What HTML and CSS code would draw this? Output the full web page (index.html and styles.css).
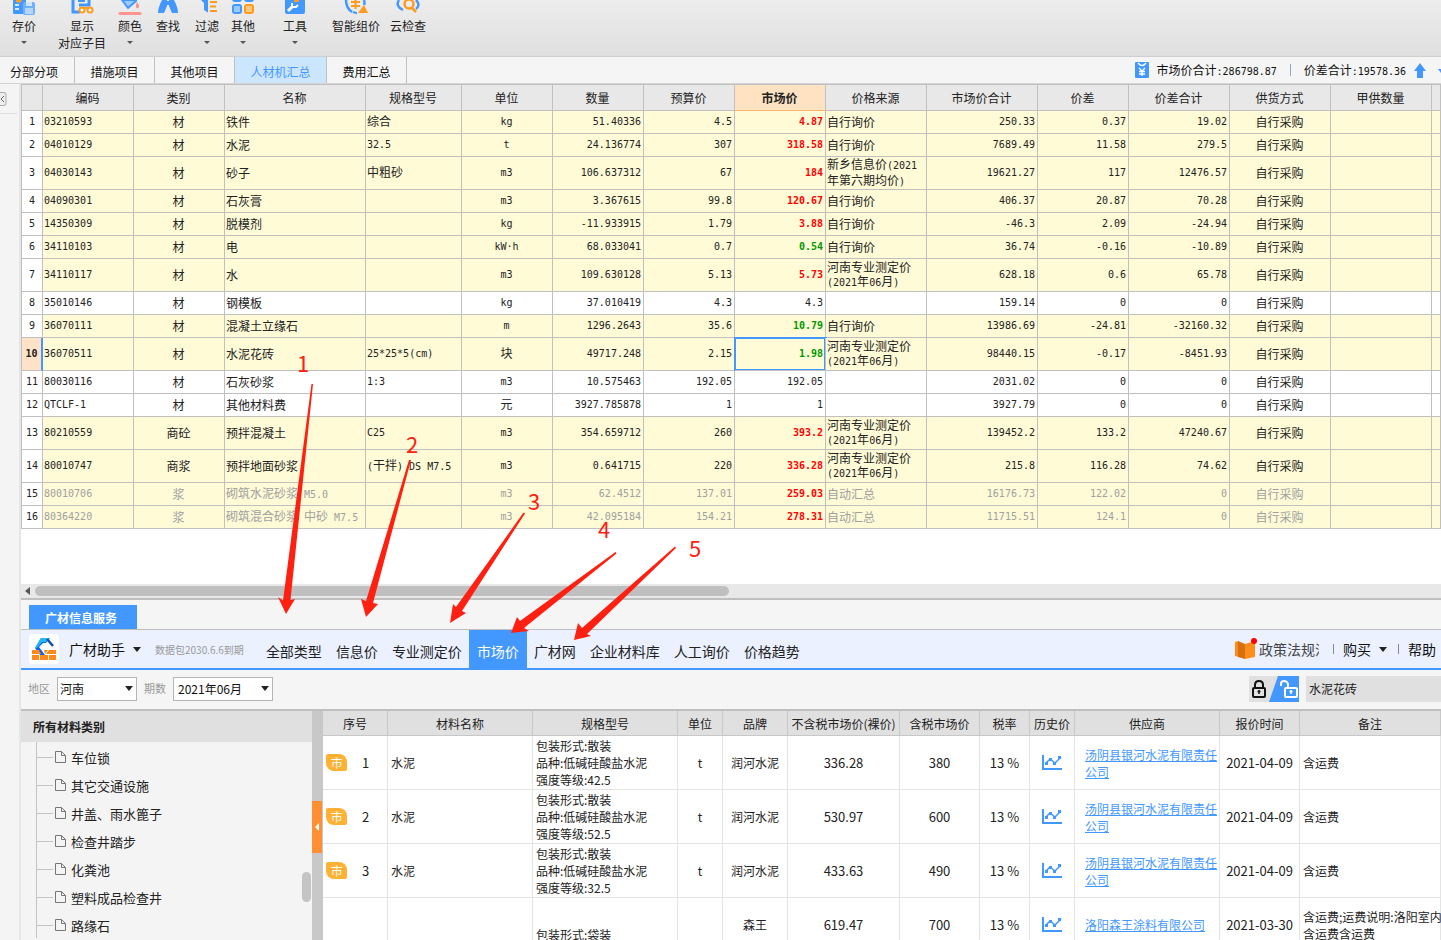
FILE: index.html
```html
<!DOCTYPE html>
<html lang="zh-CN">
<head>
<meta charset="utf-8">
<title>人材机汇总</title>
<link rel="stylesheet" href="styles.css">
</head>
<body>
<div class="app">
  <header class="toolbar">
    <button class="tool"><svg width="24" height="15" viewBox="0 0 24 15"><rect x="1" y="-6" width="13" height="20" rx="1" fill="#4398ff"/><path d="M3 5h4M3 9h4" stroke="#d8eaff" stroke-width="2"/><path d="M4 0h6L8 3 4 2z" fill="#ff9b1f"/><rect x="11" y="2" width="12" height="13" rx="2" fill="#6fb1ff"/><rect x="14" y="2" width="6" height="4" fill="#cfe5ff"/><rect x="13" y="8" width="8" height="6" fill="#b5d7ff"/></svg><span>存价</span><i class="caret"></i></button>
    <button class="tool"><svg width="24" height="15" viewBox="0 0 24 15"><path d="M3 0v12h7M19 0v5H9" fill="none" stroke="#4398ff" stroke-width="3"/><path d="M8 1h7" stroke="#4398ff" stroke-width="2"/><path d="M14 8h4" stroke="#ff9b1f" stroke-width="2"/><circle cx="12" cy="10" r="2.5" fill="#fff" stroke="#ff9b1f" stroke-width="2"/><circle cx="20" cy="10" r="2.5" fill="#fff" stroke="#ff9b1f" stroke-width="2"/></svg><span>显示</span><span>对应子目</span></button>
    <button class="tool"><svg width="24" height="15" viewBox="0 0 24 15"><path d="M4 0l6 8 8-7V0z" fill="#9accff" stroke="#4398ff" stroke-width="2" stroke-linejoin="round"/><path d="M19 2c2 3 3 5 1 6s-3-2-1-6z" fill="#ff8f8c"/><path d="M2 13.500h20" stroke="#ff9390" stroke-width="3" stroke-linecap="round"/></svg><span>颜色</span><i class="caret"></i></button>
    <button class="tool"><svg width="24" height="15" viewBox="0 0 24 15"><path d="M6 0h5v6L8 13H2C2 8 4 4 6 0zM13 0h5c2 4 4 8 4 13h-6l-3-7z" fill="#4398ff"/><path d="M10 1h4v4h-4z" fill="#4398ff"/></svg><span>查找</span></button>
    <button class="tool"><svg width="24" height="15" viewBox="0 0 24 15"><path d="M6 0h9v14l-6-4V3z" fill="#4398ff"/><path d="M14 0v15" stroke="#e8e8e8" stroke-width="2"/><path d="M15 2h7M15 6.500h6M15 11h7" stroke="#ff9b1f" stroke-width="2"/></svg><span>过滤</span><i class="caret"></i></button>
    <button class="tool"><svg width="24" height="15" viewBox="0 0 24 15"><rect x="2" y="-7" width="8" height="8" rx="2" fill="#9accff" stroke="#4398ff" stroke-width="2"/><rect x="14" y="-7" width="8" height="8" rx="2" fill="#9accff" stroke="#4398ff" stroke-width="2"/><rect x="2" y="5" width="8" height="8" rx="2" fill="#9accff" stroke="#4398ff" stroke-width="2"/><rect x="14" y="5" width="8" height="8" rx="2" fill="#ffc97d" stroke="#ff9b1f" stroke-width="2"/></svg><span>其他</span><i class="caret"></i></button>
    <button class="tool"><svg width="24" height="15" viewBox="0 0 24 15"><path d="M2 0h20v12q0 2-2 2H4q-2 0-2-2z" fill="#4398ff"/><path d="M11 0h5v2h-5z" fill="#ff9b1f"/><path d="M5 11l5-5" stroke="#fff" stroke-width="3"/><path d="M9 3v4h4l2-2" fill="none" stroke="#fff" stroke-width="2"/></svg><span>工具</span><i class="caret"></i></button>
    <button class="tool"><svg width="24" height="15" viewBox="0 0 24 15"><path d="M2 0q0 8 6 12M20 0q1 3 0 5" fill="none" stroke="#4398ff" stroke-width="2.500"/><path d="M9 12q2 1 4 1" fill="none" stroke="#4398ff" stroke-width="2"/><path d="M11.500 0v9M7 2h9M7 6h9" stroke="#ff9b1f" stroke-width="2"/><path d="M20 5l4 8h-10z" fill="#ff9b1f"/></svg><span>智能组价</span></button>
    <button class="tool"><svg width="24" height="15" viewBox="0 0 24 15"><path d="M3 0q-4 6 4 10M20 0q5 5 0 9" fill="none" stroke="#4398ff" stroke-width="2.500"/><circle cx="13" cy="4" r="4.500" fill="none" stroke="#ff9b1f" stroke-width="2.500"/><path d="M16 8l4 4" stroke="#ff9b1f" stroke-width="2.500"/></svg><span>云检查</span></button>
  </header>

  <nav class="tabs">
    <button class="tab first">分部分项</button>
    <button class="tab">措施项目</button>
    <button class="tab">其他项目</button>
    <button class="tab on">人材机汇总</button>
    <button class="tab">费用汇总</button>
    <div class="totals">
      <svg width="14" height="16" viewBox="0 0 14 16"><rect width="14" height="16" rx="1" fill="#4398ff"/><path d="M3 1q4 5 8 0" fill="none" stroke="#fff" stroke-width="1.500"/><path d="M4 6l3 3 3-3M7 9v5M4 9.500h6M4 12h6" fill="none" stroke="#fff" stroke-width="1.300"/></svg>
      <span>市场价合计<span class="m">:286798.87</span></span>
      <i class="bar"></i>
      <span>价差合计<span class="m">:19578.36</span></span>
      <svg class="up" width="12" height="15" viewBox="0 0 12 15"><path d="M6 0l6 8H9v7H3V8H0z" fill="#4398ff"/></svg>
      <svg width="3" height="15" viewBox="0 0 3 15"><path d="M0 6h3v4z" fill="#4398ff"/></svg>
    </div>
  </nav>

  <main class="main">
    <aside class="strip"><button class="expand" aria-label="展开"><svg width="7" height="14" viewBox="0 0 7 14"><path d="M-1 .5h5q2 0 2 2v9q0 2-2 2h-5" fill="#eee" stroke="#aaa"/><path d="M4 4L1 7l3 3" fill="none" stroke="#666"/></svg></button></aside>
    <div class="content">
      <section class="gridpane">
        <table class="grid">
          <colgroup><col class="w21"><col class="w91"><col class="w91"><col class="w141"><col class="w96"><col class="w91"><col class="w91"><col class="w91"><col class="w91"><col class="w101"><col class="w111"><col class="w91"><col class="w101"><col class="w101"><col class="w101"><col></colgroup>
          <thead><tr><th></th><th>编码</th><th>类别</th><th>名称</th><th>规格型号</th><th>单位</th><th>数量</th><th>预算价</th><th class="cur">市场价</th><th>价格来源</th><th>市场价合计</th><th>价差</th><th>价差合计</th><th>供货方式</th><th>甲供数量</th><th></th></tr></thead>
          <tbody>
            <tr><td>1</td><td>03210593</td><td>材</td><td>铁件</td><td><span class="z">综合</span></td><td>kg</td><td>51.40336</td><td>4.5</td><td class="up">4.87</td><td>自行询价</td><td>250.33</td><td>0.37</td><td>19.02</td><td>自行采购</td><td></td><td></td></tr>
            <tr><td>2</td><td>04010129</td><td>材</td><td>水泥</td><td>32.5</td><td>t</td><td>24.136774</td><td>307</td><td class="up">318.58</td><td>自行询价</td><td>7689.49</td><td>11.58</td><td>279.5</td><td>自行采购</td><td></td><td></td></tr>
            <tr class="tall"><td>3</td><td>04030143</td><td>材</td><td>砂子</td><td><span class="z">中粗砂</span></td><td>m3</td><td>106.637312</td><td>67</td><td class="up">184</td><td>新乡信息价<span class="m">(2021</span><br>年第六期均价<span class="m">)</span></td><td>19621.27</td><td>117</td><td>12476.57</td><td>自行采购</td><td></td><td></td></tr>
            <tr><td>4</td><td>04090301</td><td>材</td><td>石灰膏</td><td></td><td>m3</td><td>3.367615</td><td>99.8</td><td class="up">120.67</td><td>自行询价</td><td>406.37</td><td>20.87</td><td>70.28</td><td>自行采购</td><td></td><td></td></tr>
            <tr><td>5</td><td>14350309</td><td>材</td><td>脱模剂</td><td></td><td>kg</td><td>-11.933915</td><td>1.79</td><td class="up">3.88</td><td>自行询价</td><td>-46.3</td><td>2.09</td><td>-24.94</td><td>自行采购</td><td></td><td></td></tr>
            <tr><td>6</td><td>34110103</td><td>材</td><td>电</td><td></td><td>kW·h</td><td>68.033041</td><td>0.7</td><td class="down">0.54</td><td>自行询价</td><td>36.74</td><td>-0.16</td><td>-10.89</td><td>自行采购</td><td></td><td></td></tr>
            <tr class="tall"><td>7</td><td>34110117</td><td>材</td><td>水</td><td></td><td>m3</td><td>109.630128</td><td>5.13</td><td class="up">5.73</td><td>河南专业测定价<br><span class="m">(2021</span>年<span class="m">06</span>月<span class="m">)</span></td><td>628.18</td><td>0.6</td><td>65.78</td><td>自行采购</td><td></td><td></td></tr>
            <tr class="plain"><td>8</td><td>35010146</td><td>材</td><td>钢模板</td><td></td><td>kg</td><td>37.010419</td><td>4.3</td><td>4.3</td><td></td><td>159.14</td><td>0</td><td>0</td><td>自行采购</td><td></td><td></td></tr>
            <tr><td>9</td><td>36070111</td><td>材</td><td>混凝土立缘石</td><td></td><td>m</td><td>1296.2643</td><td>35.6</td><td class="down">10.79</td><td>自行询价</td><td>13986.69</td><td>-24.81</td><td>-32160.32</td><td>自行采购</td><td></td><td></td></tr>
            <tr class="tall current"><td>10</td><td>36070511</td><td>材</td><td>水泥花砖</td><td>25*25*5(cm)</td><td><span class="z">块</span></td><td>49717.248</td><td>2.15</td><td class="down active">1.98</td><td>河南专业测定价<br><span class="m">(2021</span>年<span class="m">06</span>月<span class="m">)</span></td><td>98440.15</td><td>-0.17</td><td>-8451.93</td><td>自行采购</td><td></td><td></td></tr>
            <tr class="plain"><td>11</td><td>80030116</td><td>材</td><td>石灰砂浆</td><td>1:3</td><td>m3</td><td>10.575463</td><td>192.05</td><td>192.05</td><td></td><td>2031.02</td><td>0</td><td>0</td><td>自行采购</td><td></td><td></td></tr>
            <tr class="plain"><td>12</td><td>QTCLF-1</td><td>材</td><td>其他材料费</td><td></td><td><span class="z">元</span></td><td>3927.785878</td><td>1</td><td>1</td><td></td><td>3927.79</td><td>0</td><td>0</td><td>自行采购</td><td></td><td></td></tr>
            <tr class="tall"><td>13</td><td>80210559</td><td>商砼</td><td>预拌混凝土</td><td>C25</td><td>m3</td><td>354.659712</td><td>260</td><td class="up">393.2</td><td>河南专业测定价<br><span class="m">(2021</span>年<span class="m">06</span>月<span class="m">)</span></td><td>139452.2</td><td>133.2</td><td>47240.67</td><td>自行采购</td><td></td><td></td></tr>
            <tr class="tall"><td>14</td><td>80010747</td><td>商浆</td><td>预拌地面砂浆</td><td>(<span class="z">干拌</span>) DS M7.5</td><td>m3</td><td>0.641715</td><td>220</td><td class="up">336.28</td><td>河南专业测定价<br><span class="m">(2021</span>年<span class="m">06</span>月<span class="m">)</span></td><td>215.8</td><td>116.28</td><td>74.62</td><td>自行采购</td><td></td><td></td></tr>
            <tr class="dim"><td>15</td><td>80010706</td><td>浆</td><td>砌筑水泥砂浆<span class="m"> M5.0</span></td><td></td><td>m3</td><td>62.4512</td><td>137.01</td><td class="up">259.03</td><td>自动汇总</td><td>16176.73</td><td>122.02</td><td>0</td><td>自行采购</td><td></td><td></td></tr>
            <tr class="dim"><td>16</td><td>80364220</td><td>浆</td><td>砌筑混合砂浆<span class="m"> </span>中砂<span class="m"> M7.5</span></td><td></td><td>m3</td><td>42.095184</td><td>154.21</td><td class="up">278.31</td><td>自动汇总</td><td>11715.51</td><td>124.1</td><td>0</td><td>自行采购</td><td></td><td></td></tr>
          </tbody>
        </table>
      </section>
      <div class="hscroll"><i class="left"></i><i class="thumb"></i></div>

      <section class="info">
        <div class="infotabs"><button class="infotab">广材信息服务</button></div>
        <div class="helper">
          <svg class="logo" width="30" height="30" viewBox="0 0 30 30"><rect width="30" height="30" rx="4" fill="#fff"/><path d="M12 4h9l-4 5h-3l-4 4 6 8h-5L6 14z" fill="#0c62e8"/><path d="M12 4h9l-4 4h-4l-5 6-2 0z" fill="#20b8f5"/><path d="M18 5l6 7" stroke="#0b52b5" stroke-width="2.500"/><path d="M3 16h7l2 4H3zM3 21h7v5H3zM11 21h8v5h-8zM20 21h7v5h-7zM17 20l3-4h7v4zM15 16h4l-3 4z" fill="#ff8a1c"/></svg>
          <button class="menu brand">广材助手<i class="tri"></i></button>
          <span class="expire">数据包2030.6.6到期</span>
          <nav class="kinds"><button>全部类型</button><button>信息价</button><button>专业测定价</button><button class="on">市场价</button><button>广材网</button><button>企业材料库</button><button>人工询价</button><button>价格趋势</button></nav>
          <div class="links">
            <svg width="22" height="22" viewBox="0 0 22 22"><path d="M0 4l4-1v16l-4-1z" fill="#ff8a1c"/><path d="M3 3l7 3v15l-7-2z" fill="#d86f0c"/><path d="M10 6l10-3v16l-10 2z" fill="#ff8f1c"/><circle cx="19" cy="3" r="3" fill="#f00"/></svg>
            <a class="policy" href="#">政策法规汇</a>
            <i class="sep"></i>
            <button class="menu">购买<i class="tri"></i></button>
            <i class="sep"></i>
            <button class="menu">帮助</button>
          </div>
        </div>
        <div class="filters">
          <label for="area">地区</label>
          <span class="pick area"><select id="area"><option>河南</option></select></span>
          <label for="period">期数</label>
          <span class="pick period"><select id="period"><option>2021年06月</option></select></span>
          <button class="lock" aria-label="锁定"><svg width="50" height="26" viewBox="0 0 50 26"><rect width="50" height="26" fill="#e0e0e0"/><path d="M29 0h21v26H20z" fill="#4398ff"/><rect x="4" y="12" width="12" height="9" rx="1" fill="none" stroke="#111" stroke-width="2"/><path d="M6 12V9q0-4 4-4t4 4v3" fill="none" stroke="#111" stroke-width="2"/><path d="M10 14v4M8.500 15.500h3" stroke="#111" stroke-width="1.500"/><rect x="36" y="12" width="12" height="9" rx="1" fill="none" stroke="#fff" stroke-width="2"/><path d="M32 10V8q0-3 3-3t4 3v4" fill="none" stroke="#fff" stroke-width="2"/><path d="M42 14v4M40.500 15.500h3" stroke="#fff" stroke-width="1.500"/></svg></button>
          <input class="search" type="text" value="水泥花砖" aria-label="搜索">
        </div>
        <div class="split">
          <aside class="tree">
            <h2>所有材料类别</h2>
            <ul>
              <li><svg width="11" height="12" viewBox="0 0 11 12"><path d="M.5.5h6l4 4v7H.5zM6.500.5v4h4" fill="none" stroke="#777"/></svg>车位锁</li>
              <li><svg width="11" height="12" viewBox="0 0 11 12"><path d="M.5.5h6l4 4v7H.5zM6.500.5v4h4" fill="none" stroke="#777"/></svg>其它交通设施</li>
              <li><svg width="11" height="12" viewBox="0 0 11 12"><path d="M.5.5h6l4 4v7H.5zM6.500.5v4h4" fill="none" stroke="#777"/></svg>井盖、雨水篦子</li>
              <li><svg width="11" height="12" viewBox="0 0 11 12"><path d="M.5.5h6l4 4v7H.5zM6.500.5v4h4" fill="none" stroke="#777"/></svg>检查井踏步</li>
              <li><svg width="11" height="12" viewBox="0 0 11 12"><path d="M.5.5h6l4 4v7H.5zM6.500.5v4h4" fill="none" stroke="#777"/></svg>化粪池</li>
              <li><svg width="11" height="12" viewBox="0 0 11 12"><path d="M.5.5h6l4 4v7H.5zM6.500.5v4h4" fill="none" stroke="#777"/></svg>塑料成品检查井</li>
              <li><svg width="11" height="12" viewBox="0 0 11 12"><path d="M.5.5h6l4 4v7H.5zM6.500.5v4h4" fill="none" stroke="#777"/></svg>路缘石</li>
            </ul>
            <i class="vthumb"></i>
          </aside>
          <div class="divider"><button aria-label="收起"><i></i></button></div>
          <div class="prices">
            <table class="quote">
              <colgroup><col class="w65"><col class="w145"><col class="w145"><col class="w45"><col class="w65"><col class="w112"><col class="w80"><col class="w50"><col class="w45"><col class="w145"><col class="w80"><col></colgroup>
              <thead><tr><th>序号</th><th>材料名称</th><th>规格型号</th><th>单位</th><th>品牌</th><th>不含税市场价(裸价)</th><th>含税市场价</th><th>税率</th><th>历史价</th><th>供应商</th><th>报价时间</th><th>备注</th></tr></thead>
              <tbody>
                <tr><td><div class="seq"><span class="badge">市</span><span class="no">1</span></div></td><td>水泥</td><td>包装形式:散装<br>品种:低碱硅酸盐水泥<br>强度等级:42.5</td><td>t</td><td>润河水泥</td><td>336.28</td><td>380</td><td>13 %</td><td><svg width="20" height="15" viewBox="0 0 20 15"><path d="M1 0v14h19" fill="none" stroke="#4398ff" stroke-width="2"/><path d="M4 8l4-4 5 4 6-6" fill="none" stroke="#4398ff" stroke-width="1.500"/><path d="M3 7h3v3H3zM7 3h3v3H7zM11 7h3v3h-3zM16 1h3v3h-3z" fill="#4398ff"/></svg></td><td><a href="#">汤阴县银河水泥有限责任公司</a></td><td>2021-04-09</td><td>含运费</td></tr>
                <tr><td><div class="seq"><span class="badge">市</span><span class="no">2</span></div></td><td>水泥</td><td>包装形式:散装<br>品种:低碱硅酸盐水泥<br>强度等级:52.5</td><td>t</td><td>润河水泥</td><td>530.97</td><td>600</td><td>13 %</td><td><svg width="20" height="15" viewBox="0 0 20 15"><path d="M1 0v14h19" fill="none" stroke="#4398ff" stroke-width="2"/><path d="M4 8l4-4 5 4 6-6" fill="none" stroke="#4398ff" stroke-width="1.500"/><path d="M3 7h3v3H3zM7 3h3v3H7zM11 7h3v3h-3zM16 1h3v3h-3z" fill="#4398ff"/></svg></td><td><a href="#">汤阴县银河水泥有限责任公司</a></td><td>2021-04-09</td><td>含运费</td></tr>
                <tr><td><div class="seq"><span class="badge">市</span><span class="no">3</span></div></td><td>水泥</td><td>包装形式:散装<br>品种:低碱硅酸盐水泥<br>强度等级:32.5</td><td>t</td><td>润河水泥</td><td>433.63</td><td>490</td><td>13 %</td><td><svg width="20" height="15" viewBox="0 0 20 15"><path d="M1 0v14h19" fill="none" stroke="#4398ff" stroke-width="2"/><path d="M4 8l4-4 5 4 6-6" fill="none" stroke="#4398ff" stroke-width="1.500"/><path d="M3 7h3v3H3zM7 3h3v3H7zM11 7h3v3h-3zM16 1h3v3h-3z" fill="#4398ff"/></svg></td><td><a href="#">汤阴县银河水泥有限责任公司</a></td><td>2021-04-09</td><td>含运费</td></tr>
                <tr><td></td><td></td><td class="low">包装形式:袋装</td><td></td><td>森王</td><td>619.47</td><td>700</td><td>13 %</td><td><svg width="20" height="15" viewBox="0 0 20 15"><path d="M1 0v14h19" fill="none" stroke="#4398ff" stroke-width="2"/><path d="M4 8l4-4 5 4 6-6" fill="none" stroke="#4398ff" stroke-width="1.500"/><path d="M3 7h3v3H3zM7 3h3v3H7zM11 7h3v3h-3zM16 1h3v3h-3z" fill="#4398ff"/></svg></td><td><a href="#">洛阳森王涂料有限公司</a></td><td>2021-03-30</td><td>含运费;运费说明:洛阳室内<br>含运费含运费</td></tr>
              </tbody>
            </table>
          </div>
        </div>
      </section>
    </div>
  </main>

  <svg class="notes" width="720" height="660" viewBox="0 0 720 660">
    <path d="M311.500 384h1.500L290.500 600l4.500-1-9 15-8-17 5 3.500z"/>
    <path d="M409 460h2L373 603l5 1-12 13-5-18 5 2z"/>
    <path d="M523.500 512.500l1.500 1L462 611l4 2-16 10 3-19 3 3z"/>
    <path d="M615.500 552l1 1.500L524 628l5 3-18 2 6-16 3 4z"/>
    <path d="M675 546.500l1 1.500L587 634l4 2-17 4 4-17 4 5z"/>
    <text x="303" y="372">1</text><text x="412" y="453">2</text><text x="534" y="510">3</text><text x="604" y="538">4</text><text x="695" y="557">5</text>
  </svg>
</div>
</body>
</html>
```
FILE: styles.css
```css
* { box-sizing: border-box; }
body { margin: 0; font: 12px/17px "Noto Sans CJK SC", sans-serif; color: #222; background: #f5f5f5; }
button { margin: 0; padding: 0; border: 0; background: none; font: inherit; color: inherit; }
svg { display: block; flex: none; }
.app { position: relative; height: 100vh; display: flex; flex-direction: column; overflow: hidden; }
.m { font: 10px/14px "DejaVu Sans Mono", monospace; white-space: pre; }
.z { font: 12px/14px "Noto Sans CJK SC", sans-serif; }

/* toolbar */
.toolbar { flex: none; height: 57px; display: grid; grid-template-columns: 48px 68px 28px 48px 30px 42px 62px 60px 44px; align-items: start; background: linear-gradient(#ededed, #dfdfdf); border-bottom: 1px solid #cfcfcf; }
.tool { display: flex; flex-direction: column; align-items: center; white-space: nowrap; }
.tool svg { margin-bottom: 2px; }
.caret { margin-top: 7px; border: 3px solid transparent; border-top-color: #555; border-bottom: 0; }

/* module tabs */
.tabs { flex: none; height: 27px; display: flex; background: #f5f5f5; border-bottom: 1px solid #d4d4d4; color: #111; }
.tab { width: 80px; padding-top: 2px; border-right: 1px solid #c0c0c0; }
.tab.first { width: 75px; padding-right: 6px; }
.tab.on { width: 92px; background: #cce6ff; color: #4398ff; }
.totals { margin-left: auto; display: flex; align-items: center; gap: 8px; white-space: nowrap; }
.bar { width: 1px; height: 12px; margin: 0 5px; background: #8fa9c4; }
.totals .up { margin-right: 4px; }

.main { flex: 1; min-height: 0; display: flex; }
.strip { flex: none; width: 21px; padding-top: 8px; background: #f4f4f4; border-right: 2px solid #e6e6e6; }
.expand { display: block; width: 17px; height: 22px; border-bottom: 1px solid #ddd; }
.expand svg { margin-bottom: 8px; }
.content { flex: 1; min-width: 0; display: flex; flex-direction: column; }

/* resource grid */
.gridpane { flex: none; padding-bottom: 55px; background: #fff; }
table { width: 100%; table-layout: fixed; border-collapse: separate; border-spacing: 0; }
.grid { border-top: 1px solid #c0c0c0; border-left: 1px solid #c0c0c0; line-height: 14px; }
.w21 { width: 21px; } .w45 { width: 45px; } .w50 { width: 50px; } .w65 { width: 65px; } .w80 { width: 80px; }
.w91 { width: 91px; } .w96 { width: 96px; } .w101 { width: 101px; } .w111 { width: 111px; } .w112 { width: 112px; }
.w141 { width: 141px; } .w145 { width: 145px; }
.grid th, .grid td { padding: 0 2px 0 1px; border-right: 1px solid #c0c0c0; border-bottom: 1px solid #c0c0c0; white-space: nowrap; }
.grid th { height: 26px; background: #e8e8e8; font-weight: 400; }
.grid th.cur { background: #ffe2c2; font-weight: 700; border-bottom-color: #ffb366; }
.grid td { height: 23px; background: #fffbd7; font: 10px/14px "DejaVu Sans Mono", "Noto Sans CJK SC", monospace; text-align: right; }
.grid .tall td { height: 33px; }
.grid .plain td { background: #fff; }
.grid .dim td { color: #a0a0a0; }
.grid td:nth-child(2), .grid td:nth-child(4), .grid td:nth-child(5), .grid td:nth-child(10) { text-align: left; }
.grid td:nth-child(1), .grid td:nth-child(3), .grid td:nth-child(6), .grid td:nth-child(14) { text-align: center; }
.grid td:nth-child(3), .grid td:nth-child(4), .grid td:nth-child(10), .grid td:nth-child(14) { font: 12px/14px "Noto Sans CJK SC", sans-serif; }
.grid td:first-child { padding: 0; background: #fff; color: #222; }
.grid td.up { color: #f00; font-weight: 700; }
.grid td.down { color: #090; font-weight: 700; }
.grid .current td:first-child { background: #ffe2c8; font-weight: 700; border-right: 2px solid #4398ff; }
.grid td.active { background: #fff; box-shadow: inset 0 0 0 1px #4398ff, 0 0 0 1px #4398ff; background: #fffbd7; }

.hscroll { flex: none; height: 16px; display: flex; align-items: center; gap: 5px; padding-left: 4px; background: #e8e8e8; border-bottom: 2px solid #bfbfbf; }
.hscroll .left { border: 4px solid transparent; border-right: 5px solid #555; border-left: 0; }
.hscroll .thumb { width: 49%; height: 10px; border-radius: 5px; background: #bfbfbf; }

/* price information panel */
.info { flex: 1; min-height: 0; display: flex; flex-direction: column; }
.infotabs { flex: none; padding: 5px 8px 0; border-bottom: 1px solid #bfbfbf; }
.infotab { display: block; width: 108px; height: 24px; background: #4398ff; color: #fff; font-weight: 700; padding-right: 4px; }
.helper { flex: none; display: flex; align-items: center; height: 40px; padding: 0 5px 0 8px; background: #ebf1ff; border-bottom: 2px solid #4398ff; font-size: 14px; white-space: nowrap; color: #111; }
.menu { display: flex; align-items: center; gap: 8px; }
.menu.brand { margin-left: 10px; }
.tri { border: 4px solid transparent; border-top: 5px solid #222; border-bottom: 0; }
.expire { margin: 0 15px 0 14px; font-size: 10px; color: #999; }
.kinds { align-self: stretch; display: flex; color: #222; }
.kinds button { padding: 4px 7px 0; }
.kinds .on { padding: 4px 8px 0; background: #4398ff; color: #fff; }
.links { margin-left: auto; display: flex; align-items: center; }
.policy { width: 60px; margin-left: 2px; overflow: hidden; color: #444; text-decoration: none; }
.sep { width: 1px; height: 10px; margin: 0 9px 0 11px; background: #888; }
.policy + .sep { margin-left: 14px; }

.filters { flex: none; display: flex; align-items: center; height: 41px; padding: 0 0 2px 7px; border-bottom: 2px solid #bfbfbf; }
.filters label { font-size: 11px; color: #999; margin-right: 7px; }
.pick { position: relative; margin-right: 7px; }
.pick.area { width: 80px; }
.pick.period { width: 100px; }
.pick select { display: block; width: 100%; height: 24px; appearance: none; border: 1px solid #b5b5b5; border-radius: 0; padding: 0 2px; background: #fff; font: inherit; color: #111; }
.pick.period select { padding: 0 4px; }
.pick::after { content: ""; position: absolute; right: 4px; top: 9px; border: 4px solid transparent; border-top: 5px solid #222; border-bottom: 0; pointer-events: none; }
.lock { margin-left: auto; margin-right: 7px; }
.search { width: 135px; height: 26px; padding: 0 3px; border: 0; background: #e0e0e0; font: inherit; color: #222; }

.split { flex: 1; min-height: 0; display: flex; }
.tree { position: relative; flex: none; width: 291px; overflow: hidden; background: #f4f4f4; }
.tree h2 { margin: 0; padding: 0 12px; font-size: 12px; line-height: 31px; background: #e0e0e0; }
.tree ul { margin: 0 0 0 15px; padding: 0; list-style: none; border-left: 1px solid #c4c4c4; }
.tree li { display: flex; align-items: center; height: 28px; font-size: 13px; padding-top: 2px; }
.tree li::before { content: ""; width: 16px; height: 1px; margin-right: 2px; background: #c4c4c4; }
.tree li svg { margin-right: 5px; }
.vthumb { position: absolute; right: 1px; top: 161px; width: 9px; height: 30px; border-radius: 5px; background: #c4c4c4; }
.divider { flex: none; width: 11px; padding-top: 90px; background: #c8c8c8; }
.divider button { display: flex; align-items: center; justify-content: center; width: 10px; height: 52px; background: #ff8f33; }
.divider i { border: 4px solid transparent; border-right-color: #fff; border-left: 0; }
.prices { flex: 1; min-width: 0; overflow: hidden; background: #fff; }
.quote th { height: 25px; padding: 0; background: #e0e0e0; border-right: 1px solid #c8c8c8; border-bottom: 1px solid #c8c8c8; font-weight: 400; white-space: nowrap; }
.quote td { height: 54px; padding: 0 3px; border-right: 1px solid #e4e4e4; border-bottom: 1px solid #e4e4e4; text-align: center; }
.quote td:nth-child(2), .quote td:nth-child(3), .quote td:nth-child(12) { text-align: left; white-space: nowrap; }
.quote td:nth-child(10) { text-align: left; padding: 0 0 0 10px; }
.quote td:nth-child(6), .quote td:nth-child(7), .quote td:nth-child(8), .quote td:nth-child(11) { font-size: 13px; padding: 0; }
.quote td svg { margin: 0 auto; }
.quote a { color: #4398ff; }
.quote td.low { vertical-align: bottom; padding-bottom: 8px; }
.seq { display: flex; align-items: center; }
.badge { width: 22px; height: 17px; background: #ffb133; color: #fff; border-radius: 2px 8px 2px 8px; }
.no { width: 38px; font-size: 13px; }

/* annotations over the window */
.notes { position: absolute; left: 0; top: 0; pointer-events: none; fill: #ff2011; }
.notes text { font-size: 22px; text-anchor: middle; }
```
